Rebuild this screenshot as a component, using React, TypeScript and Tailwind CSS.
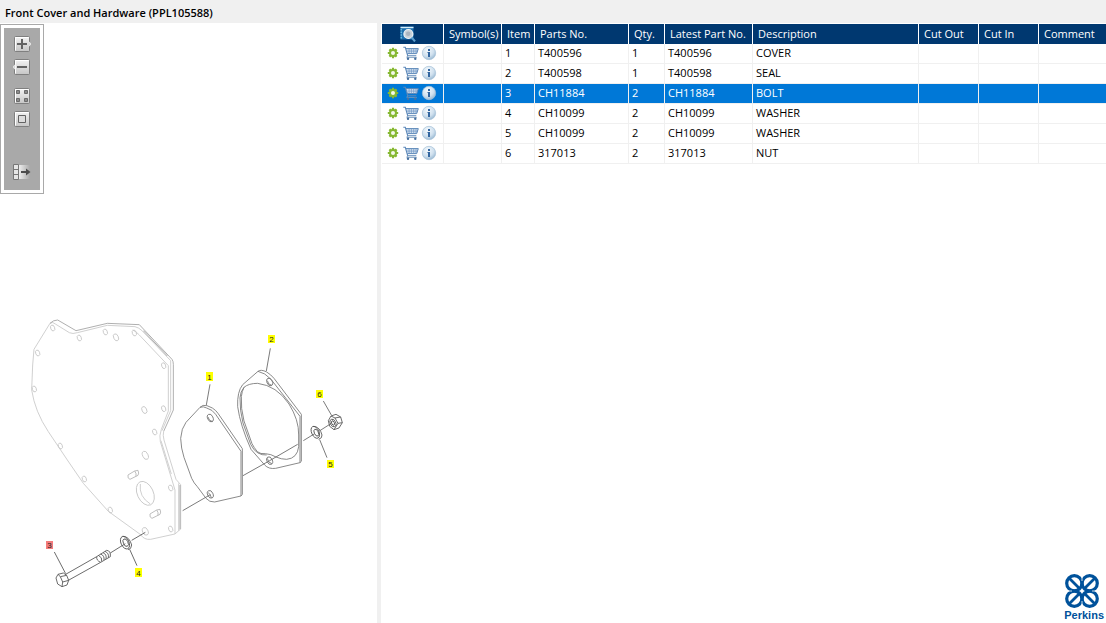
import { useState } from 'react';

interface Part {
  item: number;
  partNo: string;
  qty: number;
  latest: string;
  description: string;
}

const PARTS: Part[] = [
  { item: 1, partNo: 'T400596', qty: 1, latest: 'T400596', description: 'COVER' },
  { item: 2, partNo: 'T400598', qty: 1, latest: 'T400598', description: 'SEAL' },
  { item: 3, partNo: 'CH11884', qty: 2, latest: 'CH11884', description: 'BOLT' },
  { item: 4, partNo: 'CH10099', qty: 2, latest: 'CH10099', description: 'WASHER' },
  { item: 5, partNo: 'CH10099', qty: 2, latest: 'CH10099', description: 'WASHER' },
  { item: 6, partNo: '317013', qty: 2, latest: '317013', description: 'NUT' },
];

const HEADINGS = ['Symbol(s)', 'Item', 'Parts No.', 'Qty.', 'Latest Part No.', 'Description', 'Cut Out', 'Cut In', 'Comment'];

// centre of each number tag on the drawing
const CALLOUTS = [
  { item: 1, x: 209, y: 377 },
  { item: 2, x: 271, y: 339 },
  { item: 3, x: 49, y: 545 },
  { item: 4, x: 138, y: 573 },
  { item: 5, x: 330, y: 464 },
  { item: 6, x: 319, y: 394 },
];

const HOUSING_HOLES = [
  [98, 54], [178, 84], [256, 66], [343, 69], [53, 129], [43, 237], [431, 167], [431, 296],
  [404, 366], [121, 408], [193, 507], [271, 600], [452, 534], [452, 657],
];

function GearIcon() {
  return (
    <svg className="h-3 w-3" viewBox="0 0 12 12" fill="none">
      <path d="M6 .8v10.4M.8 6h10.4M2.4 2.4l7.2 7.2M9.6 2.4L2.4 9.6" stroke="#86b832" strokeWidth="2.2" />
      <circle cx="6" cy="6" r="3" stroke="#86b832" strokeWidth="2" />
      <circle cx="6" cy="6" r="2" fill="#f4f9ea" />
    </svg>
  );
}

function CartIcon() {
  return (
    <svg className="h-4 w-4" viewBox="0 0 16 16" fill="none">
      <path d="M3 3.8h12.2l-1.4 4.8H4.6z" fill="#d3e1f0" />
      <path d="M.3 2.3h2l2.4 8.4h8.6" stroke="#5b87b8" strokeWidth="1.1" />
      <path d="M2.8 3.6h12.5l-1.6 5H4.4" stroke="#5b87b8" />
      <path d="M3.4 6.1h11M6.1 4v4.4M8.4 4v4.4M10.7 4v4.4M13 4v4.4" stroke="#6f97c4" strokeWidth=".7" />
      <path d="M4.6 10.8l-.8 1.6h10" stroke="#7598bd" strokeWidth=".9" />
      <circle cx="5" cy="13.8" r="1.2" fill="#47709f" />
      <circle cx="12.3" cy="13.8" r="1.2" fill="#47709f" />
    </svg>
  );
}

function InfoIcon() {
  return (
    <svg className="h-4 w-4" viewBox="0 0 16 16">
      <defs>
        <radialGradient id="info" cx=".4" cy=".3" r=".75">
          <stop offset="0" stopColor="#f4f9fd" />
          <stop offset=".6" stopColor="#cfe0ee" />
          <stop offset="1" stopColor="#94b5d0" />
        </radialGradient>
      </defs>
      <circle cx="8" cy="8" r="6.7" fill="url(#info)" stroke="#a6c2d9" strokeWidth=".7" />
      <path d="M7 4h2v2H7zM6.6 7H9v5H7V8h-.6z" fill="#3366a0" />
    </svg>
  );
}

function PreviewIcon() {
  return (
    <svg className="h-4 w-4" viewBox="0 0 16 16">
      <path d="M.5.5h13v13H.5z" fill="#1c6fae" />
      <path d="M.5 1.5h13" stroke="#d7effa" strokeWidth="1.4" />
      <path d="M1.2 3v10.5" stroke="#6ec1e8" strokeWidth="1.4" strokeDasharray="1.6 1" />
      <circle cx="8.4" cy="8" r="4.5" fill="#c9d2d9" stroke="#f1f5f7" strokeWidth="1.2" />
      <circle cx="8.2" cy="7.8" r="2.2" fill="#a8b4bf" />
      <path d="M11.6 11.4l3.4 4" stroke="#5d9fce" strokeWidth="2.2" />
    </svg>
  );
}

function Plate() {
  return (
    <>
      <defs>
        <linearGradient id="plate" x1="0" y1="0" x2="0" y2="1">
          <stop offset="0" stopColor="#f3f3f3" />
          <stop offset="1" stopColor="#c6c6c6" />
        </linearGradient>
      </defs>
      <rect x="1.5" y=".5" width="15" height="15" rx="1" fill="url(#plate)" stroke="#7f7f7f" />
      <path d="M2.5 14.5v-13h13" fill="none" stroke="#fff" />
    </>
  );
}

function ToolButton({ label, className = '', children }: { label: string; className?: string; children: React.ReactNode }) {
  return (
    <button type="button" aria-label={label} className={`block h-4 w-[18px] ${className}`}>
      <svg className="h-4 w-[18px]" viewBox="0 0 18 16">
        {children}
      </svg>
    </button>
  );
}

function Toolbar() {
  return (
    <div className="w-11 shrink-0 self-start border border-[#a9a9a9] bg-white p-[3px]">
      <div className="flex flex-col items-center bg-[#a9a9a9] pt-2 pb-[10px]">
        <ToolButton label="Zoom in">
          <Plate />
          <path d="M15.8 5.5L18 8l-2.2 2.5" fill="#d8d8d8" stroke="#eee" strokeWidth=".8" />
          <path d="M4 8h10M9 3v10" stroke="#636363" strokeWidth="2" />
        </ToolButton>
        <ToolButton label="Zoom out" className="mt-[7px]">
          <Plate />
          <path d="M2.2 5.5L0 8l2.2 2.5" fill="#d8d8d8" stroke="#eee" strokeWidth=".8" />
          <path d="M4 8h10" stroke="#636363" strokeWidth="2" />
        </ToolButton>
        <ToolButton label="Show all" className="mt-[13px]">
          <Plate />
          <path d="M3.5 2.5h3v3h-3zM11.5 2.5h3v3h-3zM3.5 10.5h3v3h-3zM11.5 10.5h3v3h-3z" fill="#8c8c8c" stroke="#6b6b6b" />
        </ToolButton>
        <ToolButton label="Fit to window" className="mt-[7px]">
          <Plate />
          <path d="M5.5 4.5h7v7h-7z" fill="#ddd" stroke="#636363" />
        </ToolButton>
        <ToolButton label="Hide panel" className="mt-[37px]">
          <defs>
            <linearGradient id="fade">
              <stop offset="0" stopColor="#eee" />
              <stop offset="1" stopColor="#a9a9a9" />
            </linearGradient>
          </defs>
          <path d="M6 1h11v14H6z" fill="url(#fade)" />
          <path d="M.5.5h5v15h-5zM.5 5.5h5M.5 10.5h5" fill="#e6e6e6" stroke="#777" />
          <path d="M8 8h6" stroke="#4d4d4d" strokeWidth="2" />
          <path d="M13 4.5L17.5 8 13 11.5z" fill="#4d4d4d" />
        </ToolButton>
      </div>
    </div>
  );
}

function Diagram({ selected, onSelect }: { selected: number; onSelect: (item: number) => void }) {
  return (
    <svg className="block w-full" viewBox="0 194 377 429" fill="none">
      {/* Timing housing */}
      <g transform="translate(20 310) scale(.33333)" stroke="#c8c8c8" strokeWidth="2.6">
        <path d="M90 40L42 118 38 165 35 240Q45 305 85 365L142 450 190 520 265 604 362 674Q372 690 392 688L465 672V540L421 395Q417 378 424 358L445 303V167L358 75Q348 64 338 60M90 40Q98 34 106 42L148 68Q158 73 172 68L262 46 345 50Q357 53 366 62L452 152V302L426 362" />
        <path d="M90 40Q100 30 113 30L168 62 262 40 358 44 456 148Q460 153 460 163V300L431 364" stroke="#a2a2a2" />
        <path d="M431 364Q428 375 432 390L468 508 482 524V657L465 672M423 392L454 492M476 520V662" />
        <path d="M480 525V658M370 62L442 138" stroke="#aaa" strokeWidth="3" />
        {HOUSING_HOLES.map(([x, y]) => (
          <ellipse key={`${x}-${y}`} cx={x} cy={y} rx="6" ry="9" transform={`rotate(-20 ${x} ${y})`} />
        ))}
        <ellipse cx="288" cy="82" rx="7" ry="11" transform="rotate(-25 288 82)" />
        <ellipse cx="373" cy="300" rx="7" ry="11" transform="rotate(-25 373 300)" />
        <ellipse cx="376" cy="436" rx="8" ry="13" transform="rotate(-25 376 436)" />
        <ellipse cx="376" cy="664" rx="8" ry="12" transform="rotate(-25 376 664)" />
        <ellipse cx="376" cy="550" rx="24" ry="38" transform="rotate(-25 376 550)" />
        <path d="M361 522Q356 560 391 582" />
        <g id="stud" stroke="#b4b4b4">
          <path d="M324 495L344 483 354 481Q358 490 354 496L330 508Q322 506 324 495M344 483Q350 490 348 499" />
        </g>
        <use href="#stud" x="66" y="117" />
      </g>

      {/* Cover */}
      <g transform="translate(170 325) scale(.33333)" stroke="#777" strokeWidth="2.6">
        <path d="M90 247L48 292Q34 310 32 340Q33 370 42 397L65 460Q72 475 82 485L108 520Q118 532 134 531L213 513V379L137 268Q128 254 110 249Q100 243 90 247Z" />
        <path d="M90 247Q98 238 111 242L127 249Q138 256 144 265L217 371V508L213 513" />
        <ellipse cx="121" cy="279" rx="8" ry="12" transform="rotate(-25 121 279)" />
        <path d="M114 276Q116 288 128 290" />
        <ellipse cx="121" cy="508" rx="8" ry="12" transform="rotate(-25 121 508)" />
        <path d="M114 502Q122 508 124 518" />

        {/* Seal */}
        <path d="M264 139L218 179Q201 200 203 245Q211 302 243 373L284 420Q296 433 317 430L390 413V274L303 163Q285 143 264 139Z" />
        <path d="M264 139Q273 132 290 141Q303 149 312 160L394 268V409L390 413" />
        <path d="M222 187Q236 175 263 175Q320 182 357 237Q387 285 386 330V365Q382 400 350 403Q334 403 318 396Q303 387 286 386Q272 388 262 380Q252 368 246 356L222 288Q212 250 214 215Q216 198 222 187Z" />
        <path d="M222 187Q211 200 210 218Q209 255 219 294L242 358Q252 378 264 384Q276 391 290 390" />
        <ellipse cx="299" cy="171" rx="8" ry="12" transform="rotate(-25 299 171)" />
        <path d="M292 167Q294 180 306 181" />
        <ellipse cx="299" cy="407" rx="8" ry="12" transform="rotate(-25 299 407)" />
        <path d="M292 400Q294 414 306 416" />

        {/* Washer and nut */}
        <g stroke="#555">
          <ellipse cx="436" cy="322" rx="11" ry="19" transform="rotate(-25 436 322)" />
          <ellipse cx="439" cy="323" rx="6" ry="11" transform="rotate(-25 439 323)" />
          <path d="M431 304Q450 306 456 330Q457 340 446 343" />
          <path d="M475 287L483 273 498 268 512 276 517 293 507 309 492 314 479 304ZM483 273L495 279 512 276M495 279L504 295 517 293M504 295L492 314" />
          <ellipse cx="489" cy="294" rx="8" ry="12" transform="rotate(-25 489 294)" />
          <ellipse cx="489" cy="294" rx="4" ry="7" transform="rotate(-25 489 294)" />
        </g>
        <path d="M38 557L121 509M219 452L299 407 383 358M400 347L434 326M448 318L484 295" stroke="#666" />
        <path d="M120 178L109 240M301 70L289 138M460 228L484 270M471 398L449 344" stroke="#666" />
      </g>

      {/* Bolt and washer */}
      <g transform="translate(20 440) scale(.33333)" stroke="#555" strokeWidth="2.6">
        <path d="M108 414L114 403 130 399 140 406 146 421 141 435 126 440 113 432ZM114 403L121 410 140 406M121 410L128 426 146 421M128 426L126 440" />
        <path d="M137 403L230 350M145 421L242 367" />
        <path d="M230 350L260 331Q273 332 271 350L242 367Q229 362 230 350M235 346Q248 352 245 364M242 342Q254 347 252 360M249 338Q261 343 258 357M255 334Q268 340 265 353" />
        <ellipse cx="315" cy="308" rx="12" ry="20" transform="rotate(-25 315 308)" />
        <ellipse cx="317" cy="308" rx="7" ry="12" transform="rotate(-25 317 308)" />
        <path d="M308 289Q328 289 335 315Q334 328 324 329" />
        <path d="M271 339L316 311M335 301L376 277M103 336L137 401M351 377L329 328" />
      </g>

      {CALLOUTS.map((c) => (
        <g key={c.item} className="cursor-pointer" onClick={() => onSelect(c.item)}>
          <rect
            x={c.x - 3}
            y={c.item === 1 || c.item === 4 ? c.y - 5 : c.y - 4}
            width="7"
            height={c.item === 1 || c.item === 4 ? 9 : 8}
            fill={c.item === selected ? '#f47c7c' : '#ffff00'}
          />
          <text x={c.x + 0.5} y={c.y + 3} textAnchor="middle" fill="#222" className="font-['Liberation_Sans'] text-[8px]">
            {c.item}
          </text>
        </g>
      ))}
    </svg>
  );
}

function PerkinsLogo() {
  return (
    <div className="mt-auto mr-[2px] self-end pb-px text-[#00529b]">
      <svg className="ml-px block h-[34px] w-[34px]" viewBox="0 0 34 34" fill="none" stroke="currentColor">
        <g strokeWidth="3.2">
          <circle cx="9.3" cy="9.3" r="7.6" />
          <circle cx="24.7" cy="9.3" r="7.6" />
          <circle cx="9.3" cy="24.7" r="7.6" />
          <circle cx="24.7" cy="24.7" r="7.6" />
        </g>
        <path d="M4.5 4.5l25 25M29.5 4.5l-25 25" strokeWidth="2.8" />
        <path d="M17 14.6l2.4 2.4-2.4 2.4-2.4-2.4z" fill="#fff" stroke="none" />
        <path d="M17 0v7M17 27v7M0 17h7M27 17h7" stroke="#fff" strokeWidth=".8" />
      </svg>
      <span className="block font-['Liberation_Sans',sans-serif] text-[11px] leading-[14px] font-bold">Perkins</span>
    </div>
  );
}

export default function App() {
  const [selected, setSelected] = useState(3);

  return (
    <div className="flex min-h-screen flex-col bg-white font-['Open_Sans','Noto_Sans',sans-serif] text-[11px] text-black">
      <header className="flex h-[23px] items-center bg-[#f0f0f0] px-[5px] pt-[3px]">
        <h1 className="text-[11px] leading-4 font-semibold">Front Cover and Hardware (PPL105588)</h1>
      </header>

      <main className="grid flex-1 grid-cols-[377fr_4px_725fr]">
        <section className="flex flex-col pt-px">
          <Toolbar />
          <Diagram selected={selected} onSelect={setSelected} />
        </section>

        <div className="bg-[#f0f0f0]" />

        <section className="flex min-w-0 flex-col pt-px pl-px">
          <table className="w-full table-fixed border-separate border-spacing-0 text-left leading-4">
            <colgroup>
              <col className="w-[62px]" />
              <col className="w-[58px]" />
              <col className="w-[33px]" />
              <col className="w-[94px]" />
              <col className="w-9" />
              <col className="w-[88px]" />
              <col className="w-[166px]" />
              <col className="w-[60px]" />
              <col className="w-[60px]" />
              <col />
            </colgroup>
            <thead className="bg-[#003870] text-white">
              <tr className="h-5">
                <th className="border-r border-white p-0 pl-[18px]">
                  <button type="button" aria-label="Preview" className="block">
                    <PreviewIcon />
                  </button>
                </th>
                {HEADINGS.map((h) => (
                  <th key={h} className="border-r border-white p-0 pl-[5px] font-normal whitespace-nowrap last:border-r-0">
                    {h}
                  </th>
                ))}
              </tr>
            </thead>
            <tbody>
              {PARTS.map((part) => {
                const cell = 'border-r border-b border-[#f0f0f0] p-0 pb-[2px] pl-[3px] last:border-r-0';
                return (
                  <tr
                    key={part.item}
                    onClick={() => setSelected(part.item)}
                    className={`h-5 ${part.item === selected ? 'bg-[#0078d7] text-white' : ''}`}
                  >
                    <td className="border-r border-b border-[#f0f0f0] p-0 pb-[2px] pl-[5px]">
                      <div className="flex items-center">
                        <button type="button" aria-label="Options"><GearIcon /></button>
                        <button type="button" aria-label="Add to cart" className="ml-1"><CartIcon /></button>
                        <button type="button" aria-label="Information" className="ml-[2px]"><InfoIcon /></button>
                      </div>
                    </td>
                    <td className={cell} />
                    <td className={cell}>{part.item}</td>
                    <td className={cell}>{part.partNo}</td>
                    <td className={cell}>{part.qty}</td>
                    <td className={cell}>{part.latest}</td>
                    <td className={cell}>{part.description}</td>
                    <td className={cell} />
                    <td className={cell} />
                    <td className={cell} />
                  </tr>
                );
              })}
            </tbody>
          </table>

          <PerkinsLogo />
        </section>
      </main>
    </div>
  );
}
